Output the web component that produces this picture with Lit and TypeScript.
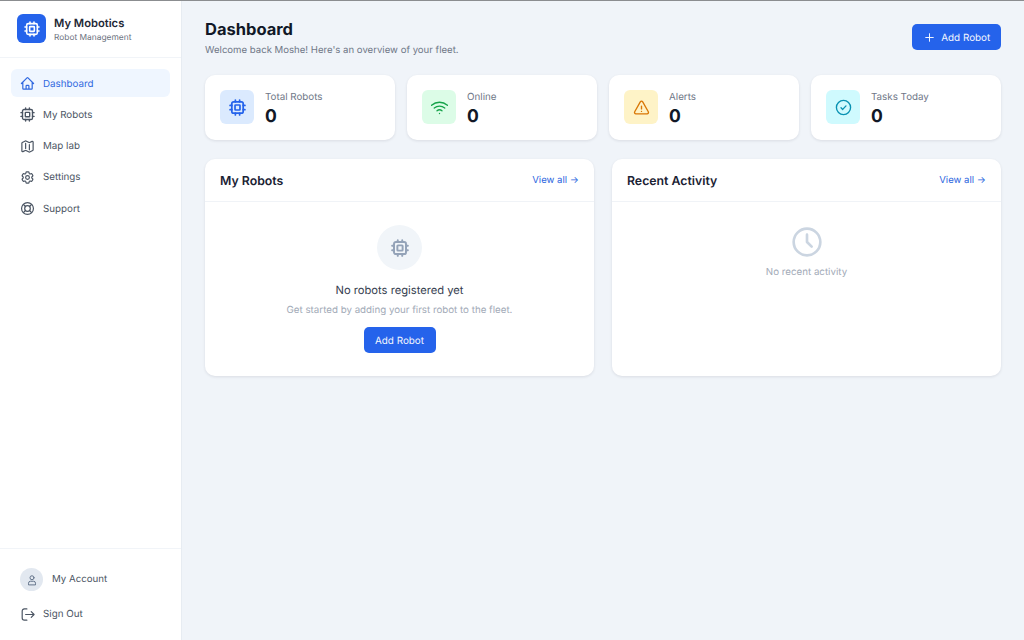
import { LitElement, html, css, svg } from 'lit';
import { customElement } from 'lit/decorators.js';

const chip = svg`<rect x="4" y="4" width="16" height="16" rx="2.500"/><rect x="8.500" y="8.500" width="7" height="7" rx="0.800"/><path d="M9 1.500V4M15 1.500V4M9 20v2.500M15 20v2.500M1.500 9H4M1.500 15H4M20 9h2.500M20 15h2.500"/>`;
const home = svg`<path d="m2.250 12 8.954-8.955c.44-.439 1.152-.439 1.591 0L21.750 12M4.500 9.750v10.125c0 .621.504 1.125 1.125 1.125H9.750v-4.875c0-.621.504-1.125 1.125-1.125h2.250c.621 0 1.125.504 1.125 1.125V21h4.125c.621 0 1.125-.504 1.125-1.125V9.750M8.250 21h8.250"/>`;
const map = svg`<path d="M9 6.750V15m6-6v8.250m.503 3.498 4.875-2.437c.381-.19.622-.58.622-1.006V4.820c0-.836-.88-1.380-1.628-1.006l-3.869 1.934c-.317.159-.69.159-1.006 0L9.503 3.252a1.125 1.125 0 0 0-1.006 0L3.622 5.689C3.240 5.880 3 6.270 3 6.695V19.180c0 .836.88 1.380 1.628 1.006l3.869-1.934c.317-.159.69-.159 1.006 0l4.994 2.497c.317.158.69.158 1.006 0Z"/>`;
const gear = svg`<path d="M9.594 3.940c.09-.542.56-.94 1.110-.94h2.593c.55 0 1.020.398 1.110.94l.213 1.281c.063.374.313.686.645.870.074.04.147.083.22.127.325.196.72.257 1.075.124l1.217-.456a1.125 1.125 0 0 1 1.370.49l1.296 2.247a1.125 1.125 0 0 1-.26 1.431l-1.003.827c-.293.241-.438.613-.43.992a7.723 7.723 0 0 1 0 .255c-.008.378.137.75.43.991l1.004.827c.424.35.534.955.26 1.430l-1.298 2.247a1.125 1.125 0 0 1-1.369.491l-1.217-.456c-.355-.133-.75-.072-1.076.124a6.470 6.470 0 0 1-.22.128c-.331.183-.581.495-.644.869l-.213 1.281c-.09.543-.56.94-1.110.94h-2.594c-.55 0-1.019-.398-1.110-.94l-.213-1.281c-.062-.374-.312-.686-.644-.870a6.520 6.520 0 0 1-.22-.127c-.325-.196-.72-.257-1.076-.124l-1.217.456a1.125 1.125 0 0 1-1.369-.49l-1.297-2.247a1.125 1.125 0 0 1 .26-1.431l1.004-.827c.292-.24.437-.613.43-.991a6.932 6.932 0 0 1 0-.255c.007-.38-.138-.751-.43-.992l-1.004-.827a1.125 1.125 0 0 1-.26-1.430l1.297-2.247a1.125 1.125 0 0 1 1.370-.491l1.216.456c.356.133.751.072 1.076-.124.072-.044.146-.086.22-.128.332-.183.582-.495.644-.869l.214-1.280Z"/><circle cx="12" cy="12" r="3"/>`;
const support = svg`<circle cx="12" cy="12" r="9.500"/><circle cx="12" cy="12" r="4.500"/><path d="m5.300 5.300 3.500 3.500M15.200 8.800l3.500-3.500M15.200 15.200l3.500 3.500M8.800 15.200l-3.500 3.500"/>`;
const user = svg`<circle cx="12" cy="7.500" r="4"/><path d="M5 21v-2.500a4 4 0 0 1 4-4h6a4 4 0 0 1 4 4V21z"/>`;
const signOut = svg`<path d="M11 3H7a3.500 3.500 0 0 0-3.500 3.500v11A3.500 3.500 0 0 0 7 21h4"/><path d="M9 12h13.500M18 7.500l4.500 4.500-4.500 4.500"/>`;
const wifi = svg`<path d="M.8 8.800c6.500-5.600 15.900-5.600 22.400 0"/><path d="M4.600 12.800c4.300-3.700 10.500-3.700 14.800 0"/><path d="M8.500 16.600c2.100-1.800 4.900-1.800 7 0"/><path d="M12 20.500h.01"/>`;
const alert = svg`<path d="M10.300 4 2.400 18a2 2 0 0 0 1.700 3h15.800a2 2 0 0 0 1.700-3L13.700 4a2 2 0 0 0-3.400 0z"/><path d="M12 10v4M12 17.500h.01"/>`;
const check = svg`<circle cx="12" cy="12" r="10"/><path d="m8.500 12.300 2.400 2.400 4.600-5"/>`;
const clock = svg`<circle cx="12" cy="12" r="10"/><path d="M12 6.500V12l3.500 3.500"/>`;
const plus = svg`<path d="M12 5v14M5 12h14"/>`;

const icon = (body: unknown, cls: string) =>
  html`<svg class=${cls} viewBox="0 0 24 24" fill="none" stroke="currentColor" stroke-linecap="round" stroke-linejoin="round">${body}</svg>`;

const navItems = [
  { label: 'Dashboard', icon: home, active: true },
  { label: 'My Robots', icon: chip, thick: true },
  { label: 'Map lab', icon: map },
  { label: 'Settings', icon: gear },
  { label: 'Support', icon: support },
];

const stats = [
  { label: 'Total Robots', icon: chip, tone: 'blue' },
  { label: 'Online', icon: wifi, tone: 'green' },
  { label: 'Alerts', icon: alert, tone: 'amber' },
  { label: 'Tasks Today', icon: check, tone: 'cyan' },
];

@customElement('app-root')
export class AppRoot extends LitElement {
  static styles = css`
    :host {
      display: flex;
      height: 640px;
      overflow: hidden;
      background: #f0f4f9;
      font-family: Inter, "Liberation Sans", sans-serif;
      color: #0f172a;
      border-top: 1px solid #8b8d90;
      box-sizing: border-box;
      text-rendering: geometricPrecision;
    }

    .sidebar {
      width: 182px;
      flex: none;
      box-sizing: border-box;
      background: #fff;
      border-right: 1px solid #e7ecf2;
      display: flex;
      flex-direction: column;
    }
    .brand {
      height: 57px;
      box-sizing: border-box;
      padding: 13px 17px 0;
      display: flex;
      gap: 8px;
      border-bottom: 1px solid #f1f4f8;
    }
    .logo {
      width: 29px;
      height: 29px;
      border-radius: 6px;
      background: #2563eb;
      color: #fff;
      display: flex;
      align-items: center;
      justify-content: center;
    }
    .logo svg { width: 16px; height: 16px; stroke-width: 2.400; }
    .brand-name { font-size: 11.200px; font-weight: 600; line-height: 14px; margin-top: 1.500px; color: #1f2937; }
    .brand-sub { font-size: 8.400px; line-height: 12px; margin-top: 2px; color: #6b7280; }

    nav { padding: 11px 11px 0; display: flex; flex-direction: column; gap: 3.250px; flex: 1; }
    .nav-item {
      height: 28px;
      box-sizing: border-box;
      padding: 2px 0 0 9px;
      display: flex;
      align-items: center;
      gap: 8px;
      border-radius: 6px;
      font-size: 9.800px;
      font-weight: 400;
      color: #4b5563;
    }
    .nav-item.active { background: #eff6ff; color: #2f68e0; }
    .nav-icon { width: 15px; height: 15px; stroke-width: 1.900; flex: none; margin-top: -1px; }
    .nav-icon.thick { stroke-width: 2.200; }

    .foot { border-top: 1px solid #f1f4f8; height: 92px; box-sizing: border-box; padding: 19px 20px 0; }
    .account { display: flex; align-items: center; gap: 9px; font-size: 9.700px; font-weight: 400; color: #4b5563; }
    .avatar {
      width: 23px;
      height: 23px;
      border-radius: 50%;
      background: #e2e8f0;
      color: #64748b;
      display: flex;
      align-items: center;
      justify-content: center;
    }
    .avatar svg { width: 12px; height: 12px; stroke-width: 2; }
    .signout { display: flex; align-items: center; gap: 8px; margin-top: 16px; font-size: 9.800px; font-weight: 400; color: #4b5563; }
    .signout .nav-icon { margin-top: 0; }

    main { flex: 1; min-width: 0; padding: 17px 23px 0 23px; }
    .top { display: flex; justify-content: space-between; align-items: flex-start; height: 57px; }
    h1 { margin: 0; font-size: 16.500px; line-height: 23px; font-weight: 700; color: #111827; }
    .welcome { margin-top: 3px; font-size: 9.600px; line-height: 14px; color: #6f7787; }

    .btn {
      display: inline-flex;
      align-items: center;
      justify-content: center;
      background: #2563eb;
      color: #f4f7fe;
      border-radius: 5px;
      font-size: 9.900px;
      font-weight: 400;
      box-sizing: border-box;
      padding-top: 1px;
    }
    .btn.header { height: 26px; width: 89px; margin-top: 6px; gap: 5.500px; }
    .btn.header svg { width: 13px; height: 13px; stroke-width: 1.800; margin-top: -1px; }
    .btn.small { height: 26px; width: 72px; margin-top: 10px; }

    .stats { display: grid; grid-template-columns: repeat(4, 190px); gap: 12px; }
    .stat {
      height: 65px;
      box-sizing: border-box;
      background: #fff;
      border-radius: 10px;
      box-shadow: 0 1px 3px rgba(15, 23, 42, .1);
      padding: 15px 15px;
      display: flex;
      gap: 11px;
    }
    .stat-icon {
      width: 34px;
      height: 34px;
      border-radius: 6px;
      display: flex;
      align-items: center;
      justify-content: center;
    }
    .stat-icon svg { width: 17px; height: 17px; stroke-width: 1.900; }
    .blue svg { stroke-width: 2.400; }
    .blue { background: #dbeafe; color: #2563eb; }
    .green { background: #dcfce7; color: #16a34a; }
    .amber { background: #fef3c7; color: #d97706; }
    .cyan { background: #cffafe; color: #0891b2; }
    .stat-label { font-size: 9.800px; line-height: 13px; margin-top: 1px; color: #6f7787; }
    .stat-value { font-size: 17.500px; line-height: 22px; font-weight: 700; margin-top: 1.500px; color: #111827; }

    .panels { display: grid; grid-template-columns: 389px 389px; gap: 18px; margin-top: 19px; }
    .panel {
      height: 217px;
      background: #fff;
      border-radius: 10px;
      box-shadow: 0 1px 3px rgba(15, 23, 42, .1);
      overflow: hidden;
    }
    .panel-head {
      height: 43px;
      box-sizing: border-box;
      padding: 0 15px;
      display: flex;
      align-items: center;
      justify-content: space-between;
      border-bottom: 1px solid #f0f3f7;
    }
    h2 { margin: 0; font-size: 12.300px; font-weight: 600; color: #1a2233; }
    .view-all { font-size: 9.600px; font-weight: 400; color: #2f68e0; }

    .empty { display: flex; flex-direction: column; align-items: center; padding-top: 23px; }
    .empty-circle {
      width: 45px;
      height: 45px;
      border-radius: 50%;
      background: #f1f5f9;
      color: #94a3b8;
      display: flex;
      align-items: center;
      justify-content: center;
    }
    .empty-circle svg { width: 18px; height: 18px; stroke-width: 2.600; }
    .empty-title { margin-top: 13px; font-size: 11.200px; line-height: 15px; font-weight: 400; color: #374151; }
    .empty-sub { margin-top: 6px; font-size: 9.750px; line-height: 13px; color: #a3abb8; }
    .activity { padding-top: 24px; }
    .clock { width: 32px; height: 32px; stroke-width: 2; color: #cbd5e1; }
    .activity .empty-sub { margin-top: 8px; }
  `;

  render() {
    return html`
      <aside class="sidebar">
        <div class="brand">
          <div class="logo">${icon(chip, '')}</div>
          <div>
            <div class="brand-name">My Mobotics</div>
            <div class="brand-sub">Robot Management</div>
          </div>
        </div>
        <nav>
          ${navItems.map(n => html`
            <div class="nav-item ${n.active ? 'active' : ''}">
              ${icon(n.icon, n.thick ? 'nav-icon thick' : 'nav-icon')}<span>${n.label}</span>
            </div>
          `)}
        </nav>
        <div class="foot">
          <div class="account">
            <div class="avatar">${icon(user, '')}</div>
            <span>My Account</span>
          </div>
          <div class="signout">${icon(signOut, 'nav-icon')}<span>Sign Out</span></div>
        </div>
      </aside>
      <main>
        <div class="top">
          <div>
            <h1>Dashboard</h1>
            <div class="welcome">Welcome back Moshe! Here's an overview of your fleet.</div>
          </div>
          <div class="btn header">${icon(plus, '')}<span>Add Robot</span></div>
        </div>
        <div class="stats">
          ${stats.map(s => html`
            <div class="stat">
              <div class="stat-icon ${s.tone}">${icon(s.icon, '')}</div>
              <div>
                <div class="stat-label">${s.label}</div>
                <div class="stat-value">0</div>
              </div>
            </div>
          `)}
        </div>
        <div class="panels">
          <section class="panel">
            <div class="panel-head"><h2>My Robots</h2><span class="view-all">View all →</span></div>
            <div class="empty">
              <div class="empty-circle">${icon(chip, '')}</div>
              <div class="empty-title">No robots registered yet</div>
              <div class="empty-sub">Get started by adding your first robot to the fleet.</div>
              <div class="btn small">Add Robot</div>
            </div>
          </section>
          <section class="panel">
            <div class="panel-head"><h2>Recent Activity</h2><span class="view-all">View all →</span></div>
            <div class="empty activity">
              ${icon(clock, 'clock')}
              <div class="empty-sub">No recent activity</div>
            </div>
          </section>
        </div>
      </main>
    `;
  }
}
